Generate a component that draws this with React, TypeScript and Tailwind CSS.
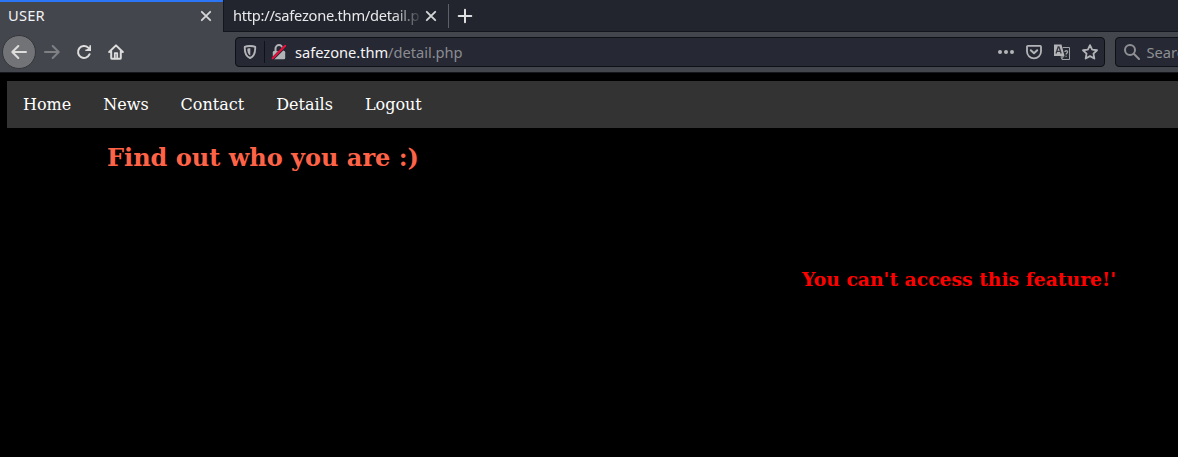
import React from "react";

type IconProps = { children: React.ReactNode; className?: string };

function Icon({ children, className = "" }: IconProps) {
  return (
    <svg viewBox="0 0 16 16" className={`size-4 shrink-0 ${className}`} fill="none" stroke="currentColor" strokeWidth="2" strokeLinecap="round" strokeLinejoin="round" aria-hidden="true">
      {children}
    </svg>
  );
}

function CloseIcon() {
  return (
    <Icon className="text-[#d4d5d6]">
      <path d="M3.8 3.8l8.4 8.4M12.2 3.8l-8.4 8.4" strokeWidth="1.9" />
    </Icon>
  );
}

function TabStrip() {
  return (
    <div className="flex h-8 bg-[#22252e]">
      <div className="flex h-8 w-[223px] shrink-0 items-center justify-between border-t-2 border-[#2a76f6] bg-[#43464d] pr-[9px] pb-[2px] pl-2">
        <span className="-mt-[2px] text-[14.67px] leading-5 tracking-[0.2px] text-[#f2f3f4]">USER</span>
        <CloseIcon />
      </div>
      <div className="flex flex-1 border-b border-l border-[#13161d]">
        <div className="flex h-8 w-[224px] items-center pl-[9px]">
          <span className="-mt-[2px] w-[186px] overflow-hidden text-[14.67px] leading-5 tracking-[-0.27px] whitespace-nowrap text-[#e8e9ea] [mask-image:linear-gradient(to_right,black_160px,transparent_190px)]">
            http://safezone.thm/detail.php
          </span>
          <span className="ml-1">
            <CloseIcon />
          </span>
        </div>
        <div className="mt-1 h-6 w-px bg-[#5d6068]" />
        <div className="flex h-[31px] w-8 items-center justify-center text-[#dedfdf]">
          <Icon>
            <path d="M8 1.7v12.6M1.7 8h12.6" />
          </Icon>
        </div>
      </div>
    </div>
  );
}

function AddressBar() {
  return (
    <div className="flex h-[30px] w-[870px] shrink-0 items-center rounded-[4px] border border-[#0e1015] bg-[#262833] text-[#b3b4b8]">
      <Icon className="ml-[6px]">
        <path d="M8 2c2.200 0 4 .2 5.200.8.300 5.400-.700 9.300-5.200 11.200C3.500 12.100 2.500 8.200 2.800 2.800 4 2.200 5.800 2 8 2z" strokeWidth="1.900" />
        <path d="M8.300 4.300v7.300C6.100 10.300 5.200 8 5.300 4.700c.900-.300 1.900-.400 3-.400z" fill="currentColor" stroke="none" />
      </Icon>
      <div className="ml-[6px] h-[22px] w-px bg-[#101219]" />
      <svg viewBox="0 0 16 16" className="ml-[6px] size-4 shrink-0" aria-hidden="true">
        <path d="M4.500 7V4.600a3.500 3.500 0 0 1 7 0V7" fill="none" stroke="#b3b4b8" strokeWidth="2" />
        <rect x="1.800" y="7" width="12.400" height="8.200" rx="1.200" fill="#b3b4b8" />
        <path d="M.8 15.600L14.800 1.600" stroke="#262833" strokeWidth="3.200" />
        <path d="M1.600 14.400L14.200 1.700" stroke="#f20d3c" strokeWidth="2" strokeLinecap="round" />
      </svg>
      <span className="ml-2 text-[14.67px] leading-5 tracking-[-0.03px] text-[#f5f5f7]">
        safezone.thm<span className="text-[#8b8c92]">/detail.php</span>
      </span>
      <div className="mr-[6px] ml-auto flex items-center gap-3">
        <Icon>
          <g fill="currentColor" stroke="none">
            <circle cx="2" cy="8" r="2" />
            <circle cx="8" cy="8" r="2" />
            <circle cx="14" cy="8" r="2" />
          </g>
        </Icon>
        <Icon>
          <path d="M1.900 1.900h12.200c.600 0 .900.300.900.900v4.700a7 6.800 0 0 1-14 0V2.800c0-.600.300-.900.900-.900z" strokeWidth="1.800" />
          <path d="M4.800 6.200L8 9.200l3.200-3" />
        </Icon>
        <svg viewBox="0 0 16 16" className="size-4 shrink-0" aria-hidden="true">
          <path d="M0 .5h7.500l3 11.500H0z" fill="#b3b4b8" />
          <path d="M2 9.500L4.200 3h.8l2.200 6.500M2.800 7.300h3.600" fill="none" stroke="#393b44" strokeWidth="1.300" />
          <path d="M8.800 3.500h6.700v12H8l-1-3" fill="none" stroke="#a1a2a7" strokeWidth="1" />
          <path d="M10.800 8c.200-1.700 3-1.700 2.800 0-.100 1.200-1.500 1.100-1.500 2.500M12.100 11.800v1" fill="none" stroke="#a1a2a7" strokeWidth="1.300" />
          <path d="M7 12h3.500L8 15.500z" fill="#85878d" />
        </svg>
        <Icon>
          <path d="M8 1.100l2.150 4.500 4.900.650-3.600 3.400.900 4.900L8 12.150 3.650 14.550l.900-4.900-3.600-3.400 4.900-.650z" strokeWidth="1.800" />
        </Icon>
      </div>
    </div>
  );
}

function Toolbar() {
  return (
    <div className="flex h-[41px] items-center overflow-hidden border-b border-[#15171c] bg-[#43464d] text-[#dddedc]">
      <div className="ml-[2px] flex size-[34px] shrink-0 items-center justify-center rounded-full border border-[#34363b] bg-[#727376]">
        <Icon>
          <path d="M15 8H1.300M7.300 2L1.300 8l6 6" />
        </Icon>
      </div>
      <Icon className="ml-2 text-[#7e8084]">
        <path d="M1 8h13.700M8.700 2l6 6-6 6" />
      </Icon>
      <Icon className="ml-4">
        <path d="M12.200 3.600a6 6 0 1 0 1.400 6.600" />
        <path d="M15 1.500V7H9.500z" fill="currentColor" stroke="none" />
        <path d="M14.200 1.700v4.500H9.900" strokeWidth="1.500" />
      </Icon>
      <Icon className="ml-4">
        <path d="M1.200 8L8 1.400 14.800 8M3.200 7.500v6.400c0 .600.300.900.900.900h7.800c.600 0 .900-.300.900-.900V7.500" />
        <path d="M6.800 14.300V9.200h2.400v5.100" strokeWidth="1.800" />
      </Icon>
      <div className="w-[111px] shrink-0" />
      <AddressBar />
      <div className="ml-[10px] flex h-[30px] w-[280px] shrink-0 items-center rounded-[4px] border border-[#0e1015] bg-[#262833] pl-2">
        <Icon className="text-[#8e9095]">
          <circle cx="6" cy="6" r="5" />
          <path d="M9.800 9.800l5.200 5.200" />
        </Icon>
        <span className="ml-[6.5px] text-[14.67px] leading-5 text-[#8e9095]">Search</span>
      </div>
    </div>
  );
}

const links = ["Home", "News", "Contact", "Details", "Logout"];

export default function App() {
  return (
    <div className="h-[457px] w-full overflow-hidden bg-black">
      <header className="font-['Noto_Sans',sans-serif]">
        <TabStrip />
        <Toolbar />
      </header>
      <main className="pt-2 pl-[7px] font-['DejaVu_Serif',serif]">
        <nav className="flex h-[47px] items-center bg-[#333333] text-base leading-[19px] text-white">
          {links.map((label) => (
            <a key={label} href="#" className="px-4">
              {label}
            </a>
          ))}
        </nav>
        <h2 className="mt-4 ml-[100px] text-2xl leading-7 font-bold text-[#ff6347]">Find out who you are :)</h2>
        <h3 className="mt-24 ml-[795px] text-[18.72px] leading-[22px] font-bold tracking-[0.03px] whitespace-nowrap text-[#ff0000]">
          You can't access this feature!'
        </h3>
      </main>
    </div>
  );
}
